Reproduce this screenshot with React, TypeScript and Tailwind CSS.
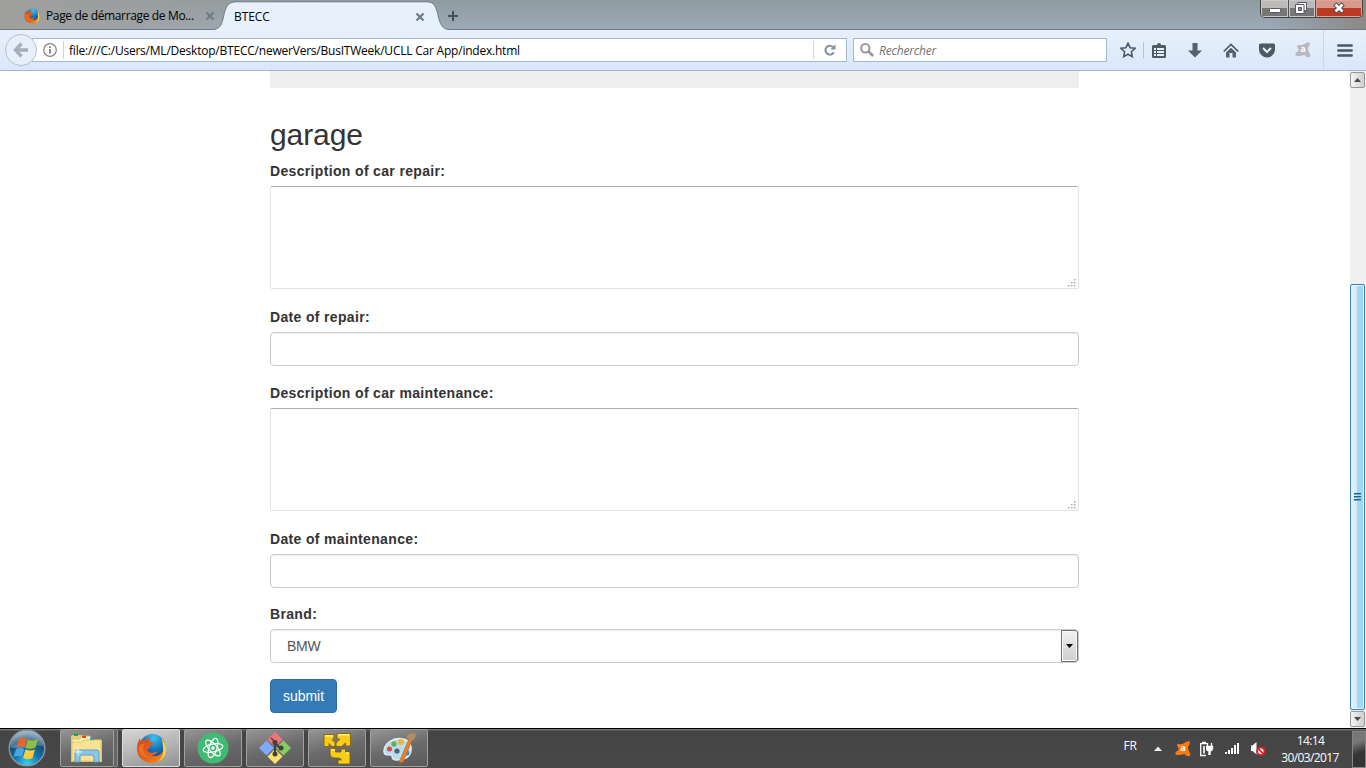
import React from "react";

const ui = "font-['Open_Sans','Noto_Sans',sans-serif]";

function FirefoxLogo({ className }: { className: string }) {
  return (
    <svg viewBox="0 0 32 32" className={className}>
      <defs>
        <radialGradient id="globe" cx=".55" cy=".15" r=".85">
          <stop offset="0" stopColor="#3fc3ef" />
          <stop offset=".5" stopColor="#1977bd" />
          <stop offset="1" stopColor="#123a7c" />
        </radialGradient>
        <linearGradient id="fox" x1="0" y1="0" x2="1" y2="1">
          <stop offset="0" stopColor="#d9461c" />
          <stop offset=".6" stopColor="#e8641b" />
          <stop offset="1" stopColor="#f7a21f" />
        </linearGradient>
      </defs>
      <circle cx="17" cy="14.5" r="13.5" fill="url(#globe)" />
      <path d="M26 5c3 3 5 7 5 12 0 8-6 14-14.500 14C8 31 1 25 1 16.500 1 12 2 9 4 5.500L5 9C6 7.500 8 7 10 7.500 11 5.500 13 4.500 14.500 4 13 6 13 8 14 9.500l4 .8c.2 2-3.500 2.500-4 4.200.3 2-1.200 2-2.500 2.500 1 4 5 4 8.500 2.500 1.500-.3 2 .5 1.500 1-1.500 2-4 2.500-6 2.300 5 2.500 12 0 13-6 .8-4-.5-8-2.500-11.800z" fill="url(#fox)" />
      <path d="M26 5c3 3 5 7 5 12 0 6-3 10-8 12.500 4-4 5.500-8 5-13C27.800 12 27.500 8 26 5z" fill="#fbd23c" />
      <path d="M3 15c1-3 3-4 6-4-2 2-2 4-1.500 6C8 21 11 24 15 25 9 26 3 22 3 15z" fill="#ef7a20" opacity=".8" />
    </svg>
  );
}

function AvastLogo({ className, fill }: { className: string; fill: string }) {
  return (
    <svg viewBox="0 0 16 16" className={className}>
      <path d="M2.500 3Q6 3.500 9 2.200 11.500.2 14.500.3 15.800 2.500 13 6 12.600 9 15 12 16.200 15 13.800 15.300 11.500 15.500 9.500 13 6 14.300 2 14 0 13.500.4 12 1.200 10 3.500 9.300 4 7.200 2.500 5.500 1.500 4 2.500 3z" fill={fill} />
      <text x="5.200" y="10.200" className="font-['Open_Sans'] text-[9px] font-bold" fill="#fff">a</text>
    </svg>
  );
}

function TabClose() {
  return (
    <svg viewBox="0 0 10 10" className="size-[10px] shrink-0">
      <path d="M1.500 1.500l7 7M8.500 1.500l-7 7" stroke="#6f7c88" strokeWidth="2.200" />
    </svg>
  );
}

function TabBar() {
  return (
    <header className="relative flex h-[30px] shrink-0 border-b border-[#717a84] bg-linear-to-b from-[#8f9b9f] to-[#9caab8] pl-6">
      <div className="absolute inset-0 bg-linear-to-r from-[#a09f9d] via-transparent via-25% to-transparent" />
      <div className="absolute top-0 right-0 h-[29px] w-24 bg-linear-to-r from-transparent to-[#8b8986]" />
      <div className={"relative flex w-[191px] items-center pt-[3px] " + ui}>
        <FirefoxLogo className="size-4 shrink-0" />
        <span className="ml-[6px] w-[159px] text-[12px] leading-4 tracking-[-0.35px] whitespace-nowrap text-black">Page de démarrage de Mo...</span>
        <TabClose />
      </div>
      <div className="relative h-[30px] w-[226px] shrink-0">
        <svg viewBox="0 0 246 30" className="absolute top-0 -left-[5px] h-[30px] w-[246px]">
          <path d="M3 30C11 29.500 12 23 13.500 17 15.500 7 18 2 26 2H217C225 2 226 8 228 15 230 24 232 29.500 240 30z" fill="#e7f1fc" />
          <path d="M3 29.500C11 29 12 23 13.500 17 15.500 7 18 1.800 26 1.800H217C225 1.800 226 8 228 15 230 24 232 29.500 240 29.500" fill="none" stroke="#747f89" />
        </svg>
        <div className={"relative flex h-full items-center pt-[3px] pl-[19px] " + ui}>
          <span className="w-[181px] text-[12px] leading-4 tracking-[-0.1px] text-black">BTECC</span>
          <TabClose />
        </div>
      </div>
      <svg viewBox="0 0 10 10" className="relative mt-[11px] ml-[7px] size-[10px]">
        <path d="M5 0v10M0 5h10" stroke="#45525c" strokeWidth="2" />
      </svg>
      <div className="absolute top-0 right-[3px] flex h-[18px] w-[103px] overflow-hidden rounded-b-[5px] border border-t-0 border-[#3e4145]">
        <div className="flex w-7 justify-center border-r border-[#4d5154] bg-linear-to-b from-[#bcbab8] from-45% to-[#777675] to-50% shadow-[inset_0_0_0_1px_#c8c8c8]">
          <svg viewBox="0 0 12 16" className="h-4 w-3"><rect x=".5" y="8.500" width="11" height="4" rx="1" fill="#fff" stroke="#555965" /></svg>
        </div>
        <div className="flex w-[27px] justify-center border-r border-[#4d5154] bg-linear-to-b from-[#bcbab8] from-45% to-[#777675] to-50% shadow-[inset_0_0_0_1px_#c8c8c8]">
          <svg viewBox="0 0 14 16" className="mr-[2px] h-4 w-[14px]">
            <path d="M4 2.500h8.500v8H4z" fill="#fff" stroke="#555965" />
            <path d="M1.500 4.500H10v9H1.500z" fill="#fff" stroke="#555965" />
            <path d="M4.500 7.500h3v3h-3z" fill="#8b8b8c" stroke="#555965" />
          </svg>
        </div>
        <div className="flex flex-1 justify-center bg-linear-to-b from-[#d69a8c] from-45% to-[#bd3a22] to-50% shadow-[inset_0_0_0_1px_#dfa294]">
          <svg viewBox="0 0 14 16" className="h-4 w-[14px]">
            <path d="M2.800 3.800l8.400 8.400M11.200 3.800l-8.400 8.400" stroke="#4f4655" strokeWidth="4.600" />
            <path d="M3.500 4.500l7 7M10.500 4.500l-7 7" stroke="#fff" strokeWidth="2.800" />
          </svg>
        </div>
      </div>
    </header>
  );
}

function NavBar() {
  return (
    <nav className={"flex h-[41px] shrink-0 items-center border-b border-[#a4b6cd] bg-linear-to-b from-[#e7f1fc] to-[#dae7f8] pl-[5px] " + ui}>
      <div className="relative z-10 flex size-8 shrink-0 items-center justify-center rounded-full border border-[#b3c2d3] bg-[#e6effa]">
        <svg viewBox="0 0 16 16" className="size-4">
          <path d="M8.500 1.500L2.500 8l6 6.500M3 8h12" fill="none" stroke="#a4afbb" strokeWidth="3.400" />
        </svg>
      </div>
      <div className="-ml-[5px] flex h-6 w-[815px] shrink-0 items-center border border-[#a5b8cf] bg-white pl-[10px]">
        <svg viewBox="0 0 14 14" className="size-[14px]">
          <circle cx="7" cy="7" r="6.300" fill="none" stroke="#828282" strokeWidth="1.200" />
          <path d="M7 6v4.500M7 3.200v1.700" stroke="#777" strokeWidth="1.700" />
        </svg>
        <div className="mr-[5px] ml-[6px] h-[18px] w-px bg-[#d5d5d5]" />
        <span className="flex-1 pt-[2px] text-[12px] leading-4 tracking-[-0.22px] whitespace-nowrap text-black">file:///C:/Users/ML/Desktop/BTECC/newerVers/BusITWeek/UCLL Car App/index.html</span>
        <div className="h-[18px] w-px bg-[#d5d5d5]" />
        <div className="flex w-8 justify-center">
          <svg viewBox="0 0 12 12" className="size-3">
            <path d="M9.800 8.200A4.400 4.400 0 1 1 9 3" fill="none" stroke="#84919e" strokeWidth="2.100" />
            <path d="M11.500.3v5.200H6.300z" fill="#84919e" />
          </svg>
        </div>
      </div>
      <div className="ml-[6px] flex h-6 w-[254px] shrink-0 items-center border border-[#a5b8cf] bg-white pl-[6px]">
        <svg viewBox="0 0 14 14" className="size-[14px]">
          <circle cx="5.300" cy="5.200" r="4.200" fill="none" stroke="#999" strokeWidth="2" />
          <path d="M8.300 8.300l4.800 4.700" stroke="#999" strokeWidth="2.600" />
        </svg>
        <span className="ml-[5px] pt-[2px] text-[12px] leading-4 tracking-[-0.2px] text-[#737373] italic">Rechercher</span>
      </div>
      <svg viewBox="0 0 16 16" className="ml-[13px] size-4 shrink-0">
        <path d="M8 1.200l2.100 4.500 4.900.6-3.600 3.400.9 4.900L8 12.200l-4.300 2.400.9-4.900L1 6.300l4.900-.6z" fill="none" stroke="#4e5963" strokeWidth="1.600" />
      </svg>
      <div className="ml-[7px] h-4 w-px shrink-0 bg-[#b4c2d2]" />
      <svg viewBox="0 0 14 15" className="ml-2 h-[15px] w-[14px] shrink-0">
        <path d="M5 2Q5 0 7 0t2 2h3.500Q14 2 14 3.500v10Q14 15 12.500 15h-11Q0 15 0 13.500v-10Q0 2 1.500 2z" fill="#4e5963" />
        <path d="M2 5h2v2H2zM5 5h7v2H5zM2 8h2v2H2zM5 8h7v2H5zM2 11h2v2H2zM5 11h7v2H5z" fill="#e5effa" />
      </svg>
      <svg viewBox="0 0 14 15" className="ml-[22px] h-[15px] w-[14px] shrink-0">
        <path d="M4.500 0h5v7.500H14L7 14.500 0 7.500h4.500z" fill="#56616b" />
      </svg>
      <svg viewBox="0 0 16 15" className="ml-[21px] h-[15px] w-4 shrink-0">
        <path d="M.7 8.500L8 1.500l7.300 7" fill="none" stroke="#4e5963" strokeWidth="1.700" />
        <path d="M3 9.500l5-4.700 5 4.700v5H9.500V10h-3v4.500H3z" fill="#56616b" />
      </svg>
      <svg viewBox="0 0 16 15" className="ml-5 h-[15px] w-4 shrink-0">
        <path d="M1.500.5h13Q16 .5 16 2v4.500c0 4-3.500 8-8 8s-8-4-8-8V2Q0 .5 1.500.5z" fill="#4e5963" />
        <path d="M4 5l4 4 4-4" fill="none" stroke="#eaf3fd" strokeWidth="2" />
      </svg>
      <AvastLogo className="ml-5 size-4 shrink-0" fill="#b9b8c2" />
      <div className="ml-3 h-10 w-px shrink-0 bg-[#cad7e7]" />
      <svg viewBox="0 0 16 13" className="ml-[13px] h-[13px] w-4 shrink-0">
        <path d="M1.300 1.500h13.400M1.300 6.500h13.400M1.300 11.500h13.400" stroke="#4c5761" strokeWidth="2.400" strokeLinecap="round" />
      </svg>
    </nav>
  );
}

function Area() {
  return (
    <div className="relative h-[103px] rounded-[2px] border border-[#e0e3ea] border-t-[#abadb3] bg-white">
      <svg viewBox="0 0 9 9" className="absolute right-[2px] bottom-0 size-[9px]">
        <path d="M7 0h1.500v1.500H7zM4 3h1.500v1.500H4zM7 3h1.500v1.500H7zM1 6h1.500v1.500H1zM4 6h1.500v1.500H4zM7 6h1.500v1.500H7z" fill="#aaa79f" />
      </svg>
    </div>
  );
}

const box = "h-[34px] rounded-[4px] border border-[#ccc] bg-white shadow-[inset_0_1px_1px_rgba(0,0,0,0.075)]";
const label = "mb-[5px] h-5 text-[14px] leading-5 font-bold tracking-[0.34px]";

function GarageForm() {
  return (
    <main className="ml-[270px] flex w-[809px] flex-col font-['Liberation_Sans',sans-serif] text-[#333]">
      <div className="h-[17px] bg-[#eee]" />
      <h2 className="mt-[30px] mb-[10px] h-[33px] text-[30px] leading-[33px] font-medium tracking-[-0.1px]">garage</h2>
      <div className={label}>Description of car repair:</div>
      <Area />
      <div className={"mt-[18px] " + label}>Date of repair:</div>
      <div className={box} />
      <div className={"mt-[17px] " + label}>Description of car maintenance:</div>
      <Area />
      <div className={"mt-[18px] " + label}>Date of maintenance:</div>
      <div className={box} />
      <div className={"mt-4 " + label}>Brand:</div>
      <div className={"flex items-stretch overflow-hidden " + box}>
        <span className="flex-1 pl-4 text-[14px] leading-8 tracking-[-0.3px] text-[#555]">BMW</span>
        <div className="flex w-[17px] items-center justify-center rounded-r-[3px] border border-[#707070] bg-linear-to-b from-[#f2f2f2] via-[#dedede] to-[#cfcfcf] shadow-[inset_0_0_0_1px_#fafafa]">
          <svg viewBox="0 0 7 4" className="h-1 w-[7px]"><path d="M0 0h7L3.500 4z" fill="#000" /></svg>
        </div>
      </div>
      <button className="mt-4 h-[34px] w-[67px] rounded-[4px] border border-[#2e6da4] bg-[#337ab7] text-[14px] leading-5 text-white">submit</button>
    </main>
  );
}

function ScrollArrow({ d }: { d: string }) {
  return (
    <div className="flex h-4 w-[15px] items-center justify-center rounded-[2px] border border-[#979797] bg-linear-to-r from-[#f4f4f4] to-[#cfcfcf]">
      <svg viewBox="0 0 7 4" className="h-1 w-[7px]"><path d={d} fill="#484848" /></svg>
    </div>
  );
}

function ScrollBar() {
  return (
    <aside className="ml-auto flex w-[16px] flex-col bg-[#f0f0f0] pt-px">
      <ScrollArrow d="M0 4h7L3.500 0z" />
      <div className="mt-[196px] flex h-[426px] w-[15px] items-center justify-center rounded-[2px] border border-[#3c7fb1] bg-linear-to-r from-[#e3f4fc] from-0% via-[#d0ebfa] via-45% to-[#a3d6f5] to-50% shadow-[inset_0_0_0_1px_#e5f5fd]">
        <div className="flex h-2 w-[7px] flex-col justify-between">
          <div className="h-[2px] border-t border-[#245f83] bg-[#6facc9]" />
          <div className="h-[2px] border-t border-[#245f83] bg-[#6facc9]" />
          <div className="h-[2px] border-t border-[#245f83] bg-[#6facc9]" />
        </div>
      </div>
      <div className="mt-px">
        <ScrollArrow d="M0 0h7L3.500 4z" />
      </div>
    </aside>
  );
}

function StartOrb() {
  return (
    <svg viewBox="0 0 38 38" className="size-[38px]">
      <defs>
        <radialGradient id="orb" cx=".5" cy=".95" r=".9">
          <stop offset="0" stopColor="#35d5f7" />
          <stop offset=".4" stopColor="#1575ad" />
          <stop offset=".75" stopColor="#15486f" />
          <stop offset="1" stopColor="#8aa2b4" />
        </radialGradient>
      </defs>
      <circle cx="19" cy="19" r="17.800" fill="url(#orb)" stroke="#8799a6" strokeWidth="1.400" />
      <path d="M2 18C3 8 10 2 19 2s16 6 17 16c-9-5-22 5-34 0z" fill="#d6e6f0" opacity=".3" />
      <path d="M11 10c3-2 5-1.500 8 0L16.500 18.500c-3-1.500-5-1.500-8 0z" fill="#e9642b" />
      <path d="M20 10.500c3 1.500 6 1.500 10-.5l-2.500 8.500c-3.500 2-7 1.500-10 .4z" fill="#8fbd42" />
      <path d="M8.200 20c3-1.500 5-1.500 8 0L14 28c-3-1.500-5.500-1.500-8.500 0z" fill="#4aa5e1" />
      <path d="M17.500 20.500c3 1 6.500 1.500 9.500 0L24.500 29c-3 2-6.500 1.500-9.500 0z" fill="#fccb3e" />
    </svg>
  );
}

function FolderIcon() {
  return (
    <svg viewBox="0 0 34 32" className="h-8 w-[34px]">
      <path d="M1 5q0-2 2-2h9l1 3h7l1 2h11v22H1z" fill="#e9cf72" />
      <path d="M2 7h8l1-3h9l1 4h10v21H2z" fill="#fbf1b8" stroke="#d7b755" strokeWidth=".8" />
      <path d="M2 10h10l1-2h18v21H2z" fill="#f7e392" stroke="#dfc267" strokeWidth=".8" />
      <path d="M4 2h4v2H4z" fill="#21a43b" /><path d="M12 4h4v2h-4z" fill="#d54b2a" /><path d="M20 6h4v2h-4z" fill="#3b94d5" />
      <path d="M5 30V20q0-2 2-2h20q2 0 2 2v10h-5v-5q0-2-2-2H12q-2 0-2 2v5z" fill="#8bc8e8" stroke="#5ba0c9" />
      <path d="M8 13l.8 5 4 2-4 1L8 26l-.8-5-4-1 4-2z" fill="#fff" opacity=".6" />
    </svg>
  );
}

function AtomIcon() {
  return (
    <svg viewBox="0 0 32 32" className="size-8">
      <circle cx="16" cy="16" r="15.500" fill="#41ba74" />
      <g fill="none" stroke="#fff" strokeWidth="1.200" transform="rotate(-12 16 16)">
        <ellipse cx="16" cy="16" rx="10" ry="4" />
        <ellipse cx="16" cy="16" rx="10" ry="4" transform="rotate(60 16 16)" />
        <ellipse cx="16" cy="16" rx="10" ry="4" transform="rotate(120 16 16)" />
      </g>
      <circle cx="16" cy="16" r="1.700" fill="#fff" />
    </svg>
  );
}

function GitIcon() {
  return (
    <svg viewBox="0 0 32 32" className="size-8">
      <path d="M16 0l7.500 7.500L16 15 8.500 7.500z" fill="#ef7474" />
      <path d="M7.500 8.500L15 16l-7.500 7.500L0 16z" fill="#7faaf5" />
      <path d="M24.500 8.500L32 16l-7.500 7.500L17 16z" fill="#83ce5c" />
      <path d="M16 17l7.500 7.500L16 32l-7.500-7.500z" fill="#f9e070" />
      <path d="M16 10v12M16 11l5 5" stroke="#44403e" strokeWidth="2" />
      <path d="M12 6l4 4" stroke="#544" strokeWidth="1.600" />
      <circle cx="16" cy="10.500" r="2.500" fill="#44403e" /><circle cx="22" cy="16" r="2.500" fill="#44403e" /><circle cx="16" cy="22" r="2.500" fill="#44403e" />
    </svg>
  );
}

function ArrowsIcon() {
  return (
    <svg viewBox="0 0 32 32" className="size-8">
      <g fill="#f9cc18" stroke="#7d5c08" strokeWidth=".8">
        <path d="M3 3h10v4l-2 1 3 3v4h-3L8 12v3H3z" transform="translate(0 -.5)" />
        <path d="M16 1.500h13.500V14h-5v-3l-4 3.500H15V11l4-4h-3z" />
        <path d="M9 16.500h5.500v3.500H20v-3h4.500v3H29v12H17v-4h3.500l-2-2H14q-5 0-5-5z" />
      </g>
      <path d="M4 4h8M17 2.800h11M10 17.800h4M25 21h3" stroke="#fff176" strokeWidth="1.600" />
    </svg>
  );
}

function PaletteIcon() {
  return (
    <svg viewBox="0 0 34 32" className="h-8 w-[34px]">
      <path d="M2 18C3 10 13 5 21 7c6 1 9 6 8 12-1 7-8 9-15 9-4 0-4-2-4-4 0-3-9 2-8-6z" fill="#b9dcef" stroke="#e2f2fa" strokeWidth="1.300" />
      <circle cx="7.500" cy="17" r="2.500" fill="#dc4d3d" /><circle cx="12" cy="12" r="2.700" fill="#62b550" /><circle cx="19" cy="10" r="2.900" fill="#edb536" /><circle cx="15" cy="19" r="2.600" fill="#49677b" /><circle cx="25" cy="21" r="2.500" fill="#3798d5" />
      <path d="M27 7l3 1-9 22-4 1 1-3z" fill="#e88125" stroke="#b9611e" strokeWidth=".6" />
      <path d="M24.500 6c0-4 4-5 8.500-5 2 4-1 7-4 8z" fill="#b88c62" />
    </svg>
  );
}

function TaskButton({ children, active = false }: { children: React.ReactNode; active?: boolean }) {
  return (
    <div className={"mr-1 flex h-[38px] w-[58px] shrink-0 items-center justify-center rounded-[2px] border " + (active ? "border-[#dedede] bg-linear-165 from-[#d6d6d6] via-[#b5b5b5] to-[#929292]" : "border-[#a0a0a0] bg-linear-165 from-[#969696] via-[#6b6b6b] via-50% to-[#595959]")}>
      {children}
    </div>
  );
}

function Tray() {
  return (
    <div className={"ml-auto flex items-center text-white " + ui}>
      <span className="mr-[17px] -mt-[6px] text-[12px]">FR</span>
      <svg viewBox="0 0 8 5" className="mr-[13px] h-[5px] w-2"><path d="M0 5l4-4.500L8 5z" fill="#eee" /></svg>
      <AvastLogo className="mr-2 size-4" fill="#ff7a0c" />
      <svg viewBox="0 0 15 16" className="mr-[11px] h-4 w-[15px]">
        <path d="M7 14.500H1.700V2.700h6.500M3 1.300h4" fill="none" stroke="#fff" strokeWidth="1.300" />
        <path d="M4 5h2v7.500H4z" fill="#ddd" />
        <path d="M8.500 2v3M12.500 2v3" stroke="#fff" strokeWidth="1.300" />
        <path d="M7 4.800h7.200V8q-.5 2.300-2.500 2.600V14H9.300v-3.400Q7.300 10.300 7 8z" fill="#fff" />
      </svg>
      <svg viewBox="0 0 15 13" className="mr-[10px] h-[13px] w-[15px]">
        <path d="M0 10h2v2H0zM3 8h2v4H3zM6 6h2v6H6zM9 3h2v9H9zM12 1h2v11h-2z" fill="#fff" />
      </svg>
      <svg viewBox="0 0 16 16" className="mr-[14px] size-4">
        <path d="M1 4.500h1.500l4-3.500v12.500l-4-3.500H1z" fill="#fff" />
        <circle cx="10.800" cy="10.300" r="3.700" fill="#fff" stroke="#e02124" strokeWidth="1.900" />
        <path d="M8.200 7.700l5.200 5.200" stroke="#e02124" strokeWidth="1.700" />
      </svg>
      <div className="mr-3 flex w-[60px] flex-col items-center text-[12px] leading-[17px] tracking-[-0.6px]">
        <span className="pl-px">14:14</span>
        <span>30/03/2017</span>
      </div>
      <div className="mt-px h-[37px] w-[14px] border border-[#858585] bg-linear-160 from-[#777] from-30% to-[#343434] to-60%" />
    </div>
  );
}

export default function App() {
  return (
    <div className="flex h-[768px] w-[1366px] flex-col overflow-hidden bg-white">
      <TabBar />
      <NavBar />
      <div className="flex h-[657px] shrink-0">
        <GarageForm />
        <ScrollBar />
      </div>
      <footer className="flex h-10 shrink-0 border-t border-black bg-linear-to-b from-[#737373] from-[1px] via-[#444] via-[2px] to-[#484848]">
        <div className="mr-[14px] ml-2"><StartOrb /></div>
        <div className="mr-1 flex h-[38px] w-[58px] shrink-0">
          <div className="flex w-[54px] items-center justify-center rounded-[2px] border border-[#a0a0a0] bg-linear-165 from-[#969696] via-[#6b6b6b] to-[#595959]"><FolderIcon /></div>
          <div className="w-1 rounded-r-[2px] border border-l-0 border-[#919191] bg-[#666]" />
        </div>
        <TaskButton active><FirefoxLogo className="size-[31px]" /></TaskButton>
        <TaskButton><AtomIcon /></TaskButton>
        <TaskButton><GitIcon /></TaskButton>
        <TaskButton><ArrowsIcon /></TaskButton>
        <TaskButton><PaletteIcon /></TaskButton>
        <Tray />
      </footer>
    </div>
  );
}
